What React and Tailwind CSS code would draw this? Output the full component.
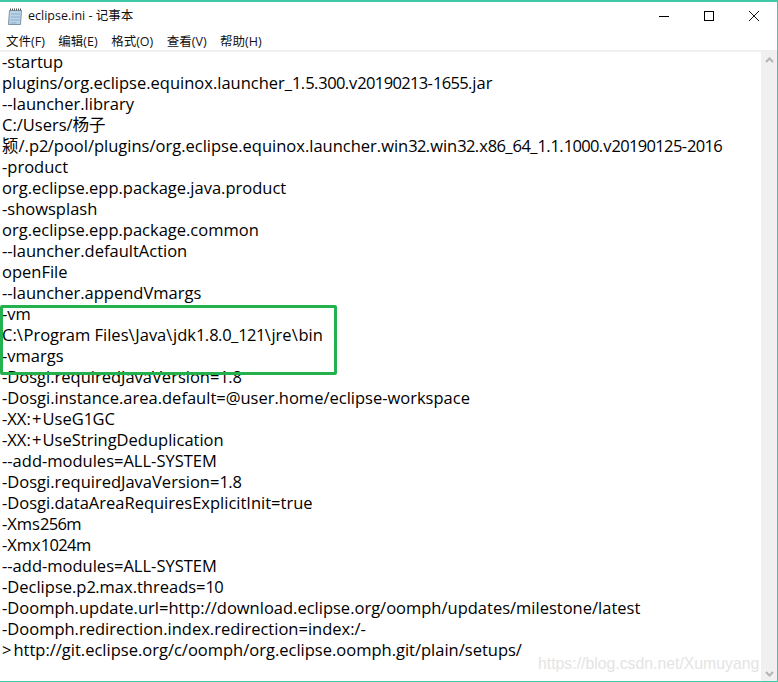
const lines = [
  "-startup",
  "plugins/org.eclipse.equinox.launcher_1.5.300.v20190213-1655.jar",
  "--launcher.library",
  "C:/Users/杨子",
  "颍/.p2/pool/plugins/org.eclipse.equinox.launcher.win32.win32.x86_64_1.1.1000.v20190125-2016",
  "-product",
  "org.eclipse.epp.package.java.product",
  "-showsplash",
  "org.eclipse.epp.package.common",
  "--launcher.defaultAction",
  "openFile",
  "--launcher.appendVmargs",
  "-vm",
  "C:\\Program Files\\Java\\jdk1.8.0_121\\jre\\bin",
  "-vmargs",
  "-Dosgi.requiredJavaVersion=1.8",
  "-Dosgi.instance.area.default=@user.home/eclipse-workspace",
  "-XX:+UseG1GC",
  "-XX:+UseStringDeduplication",
  "--add-modules=ALL-SYSTEM",
  "-Dosgi.requiredJavaVersion=1.8",
  "-Dosgi.dataAreaRequiresExplicitInit=true",
  "-Xms256m",
  "-Xmx1024m",
  "--add-modules=ALL-SYSTEM",
  "-Declipse.p2.max.threads=10",
  "-Doomph.update.url=http://download.eclipse.org/oomph/updates/milestone/latest",
  "-Doomph.redirection.index.redirection=index:/-",
  ">http://git.eclipse.org/c/oomph/org.eclipse.oomph.git/plain/setups/",
];
const menus = ["文件(F)", "编辑(E)", "格式(O)", "查看(V)", "帮助(H)"];
const font = { fontFamily: '"Open Sans","Noto Sans CJK SC",sans-serif' };

function Line({ text }) {
  const parts = text.split(/(\d+|\\|>|:\+)/);
  return (
    <div className="whitespace-pre h-[21px]">
      {parts.map((p, i) =>
        /^\d/.test(p) ? (
          <span key={i} className="tracking-[-0.65px]">{p}</span>
        ) : p === "\\" ? (
          <span key={i} className="tracking-[0.7px]">{p}</span>
        ) : p === ">" ? (
          <span key={i} className="tracking-[2px]">{p}</span>
        ) : p === ":+" ? (
          <span key={i} className="tracking-[1.2px]">{p}</span>
        ) : (
          <span key={i}>{p}</span>
        )
      )}
    </div>
  );
}

function NotepadIcon() {
  return (
    <svg width="17" height="18" viewBox="0 0 17 18" className="shrink-0">
      <path d="M2.500 2.500h12l-1 14h-12z" fill="#b9d3e8" stroke="#7f93a3" />
      <path d="M4 6h9M4 9h9M3.500 12h9M3.500 15h6" stroke="#8faec6" />
      <path d="M3 1.500h11" stroke="#555" strokeDasharray="1 1" strokeWidth="2" />
    </svg>
  );
}

export default function App() {
  return (
    <div
      className="relative w-[778px] h-[682px] bg-white border-t-2 border-r border-b border-[#3fc8a8] overflow-hidden flex flex-col text-black"
      style={font}
    >
      <div className="h-[28px] flex items-center shrink-0">
        <div className="pl-[7px] pr-[4px] pt-[2px]"><NotepadIcon /></div>
        <span className="text-[12.5px] leading-[16px] text-[#111]">eclipse.ini - 记事本</span>
        <div className="ml-auto flex items-center pr-[17px] gap-[33px]">
          <svg width="12" height="12" viewBox="0 0 12 12"><path d="M1 6.500h10" stroke="#000" /></svg>
          <svg width="12" height="12" viewBox="0 0 12 12"><rect x="1.500" y="1.500" width="9" height="9" fill="none" stroke="#000" /></svg>
          <svg width="12" height="12" viewBox="0 0 12 12"><path d="M1 1l10 10M11 1L1 11" stroke="#111" /></svg>
        </div>
      </div>
      <div className="h-[20px] flex items-center gap-[13.500px] pl-[6px] pt-[3px] text-[12.5px] leading-[16px] text-[#111] shrink-0">
        {menus.map((m) => <span key={m}>{m}</span>)}
      </div>
      <div className="h-[2px] bg-[#f0f0f0] shrink-0" />
      <div className="flex-1 flex min-h-0">
        <div className="flex-1 pl-[2px] -mt-[1px] text-[16.5px] leading-[21px]">
          {lines.map((l, i) => <Line key={i} text={l} />)}
        </div>
        <div className="w-[16px] bg-[#f0f0f0] flex flex-col justify-between items-center pt-[5px] pb-[4px]">
          <svg width="9" height="6" viewBox="0 0 9 6"><path d="M1 5l3.500-3.500L8 5" fill="none" stroke="#b5b5b5" strokeWidth="2" /></svg>
          <svg width="9" height="6" viewBox="0 0 9 6"><path d="M1 1l3.500 3.500L8 1" fill="none" stroke="#b5b5b5" strokeWidth="2" /></svg>
        </div>
      </div>
      <div className="absolute left-0 top-[303px] w-[337px] h-[70px] border-[3px] border-[#22b14c] rounded-[2px]" />
      <div
        className="absolute left-[538px] top-[653px] text-[15.8px] leading-[18px] text-[#e4e4e4]"
        style={{ fontFamily: '"Liberation Sans",sans-serif' }}
      >
        https://blog.csdn.net/Xumuyang
      </div>
    </div>
  );
}
